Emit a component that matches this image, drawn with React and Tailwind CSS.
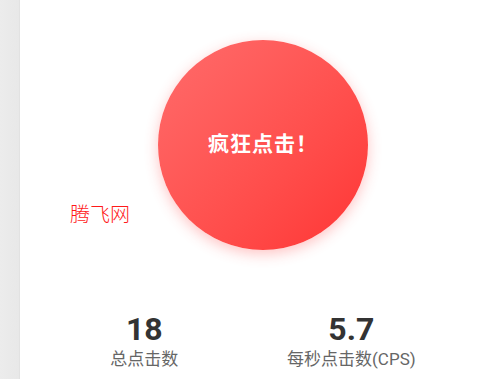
import React from 'react';

const App = () => {
  const stats = [
    { number: '18', label: '总点击数' },
    { number: '5.7', label: '每秒点击数(CPS)' }
  ];

  return (
    <div className="relative flex h-[379px] w-[498px] overflow-hidden bg-white font-['Roboto','Noto_Sans_CJK_SC',sans-serif]">
      {/* left rail */}
      <div className="h-full w-[20px] shrink-0 border-r border-[#e2e2e2] bg-gradient-to-r from-[#ececec] to-[#e8e8e8]" />

      <div className="flex flex-1 flex-col">
        {/* click button */}
        <div className="flex justify-center pl-[8px] pt-[40px]">
          <button className="flex h-[210px] w-[210px] items-center justify-center rounded-full bg-gradient-to-br from-[#ff6b6b] to-[#ff3333] text-[21px] font-bold tracking-[1px] text-white shadow-[0_4px_14px_rgba(255,60,60,0.3)]">
            疯狂点击！
          </button>
        </div>

        {/* stats */}
        <div className="ml-[36px] mt-[60px] flex w-[414px] justify-around">
          {stats.map((stat, index) => (
            <div key={index} className="flex flex-col items-center">
              <p className="text-[32px] font-bold leading-[38px] text-[#333]">{stat.number}</p>
              <p className="text-[17px] leading-[22px] text-[#666]">{stat.label}</p>
            </div>
          ))}
        </div>
      </div>

      {/* watermark */}
      <span className="absolute left-[70px] top-[199px] font-['Noto_Sans_CJK_SC',serif] text-[20px] font-light text-[#ff1a1a]">
        腾飞网
      </span>
    </div>
  );
};

export default App;
